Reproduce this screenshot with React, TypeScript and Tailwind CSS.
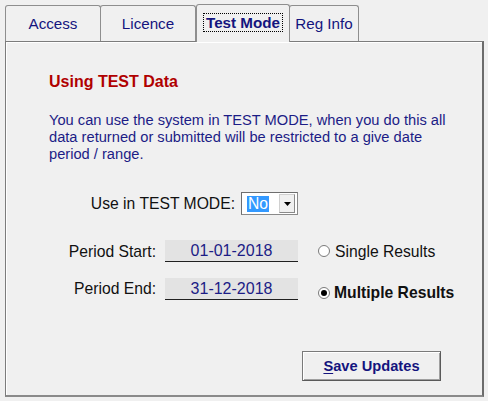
import { useState } from "react";

const TABS = ["Access", "Licence", "Test Mode", "Reg Info"];
const WIDTHS = ["w-[96px]", "w-[96px] -ml-px", "w-[94px]", "w-[70px] -ml-px"];

function Radio({ checked }: { checked: boolean }) {
  return (
    <span className="w-[12px] h-[12px] rounded-full border border-[#7a7a7a] bg-white flex items-center justify-center shrink-0">
      {checked && <span className="w-[6px] h-[6px] rounded-full bg-black" />}
    </span>
  );
}

function DateField({ value }: { value: string }) {
  return (
    <div className="w-[133px] h-[22px] bg-[#e3e3e3] border-b border-[#202020] text-[#1c1c86] text-[16px] flex items-center justify-center">
      {value}
    </div>
  );
}

export default function App() {
  const [tab, setTab] = useState(2);
  const [multi, setMulti] = useState(true);

  return (
    <div className="w-[488px] h-[401px] bg-[#f0f0f0] font-['Liberation_Sans',Arial,sans-serif] text-[15.7px] leading-[17px] overflow-hidden">
      <div className="h-[41px] flex items-end pl-[5px]">
        {TABS.map((t, i) => {
          const active = i === tab;
          return (
            <button
              key={t}
              onClick={() => setTab(i)}
              className={`${WIDTHS[i]} flex items-center justify-center bg-[#f0f0f0] border-t border-l border-r border-[#8e8e8e] rounded-t-[3px] text-[15.2px] text-[#14147e] ${
                active ? "h-[38px] -mb-px relative z-10 font-bold pb-[2px]" : "h-[36px]"
              }`}
            >
              {active ? (
                <span className="border border-dotted border-black px-[2px] h-[19px] flex items-center">{t}</span>
              ) : (
                t
              )}
            </button>
          );
        })}
      </div>

      <div className="ml-[5px] w-[479px] h-[356px] border-l border-t border-[#7c7c7c] border-r-2 border-r-[#6c6c6c] border-b-2 border-b-[#8a8a8a] shadow-[inset_1px_1px_0_#ffffff] flex flex-col">
        <div className="pt-[31px] pl-[43px] pr-[30px]">
          <h1 className="font-bold text-[16px] text-[#b00000]">Using TEST Data</h1>
          <p className="mt-[22px] text-[14.67px] text-[#1c1c86]">
            You can use the system in TEST MODE, when you do this all data returned or submitted will be restricted to a give date period / range.
          </p>
        </div>

        <div className="mt-[29px] flex items-center">
          <span className="w-[229px] text-right text-[#111]">Use in TEST MODE:</span>
          <div className="ml-[6px] w-[57px] h-[23px] bg-white border border-[#8a8a8a] border-t-[#6e6e6e] border-l-[#6e6e6e] flex items-center pl-[5px] pr-[2px]">
            <span className="bg-[#3399ff] text-white h-[16px] px-px flex items-center">No</span>
            <span className="ml-auto w-[16px] h-[19px] bg-[#f0f0f0] border border-[#d0d0d0] border-r-[#8a8a8a] border-b-[#8a8a8a] flex items-center justify-center">
              <svg width="7" height="4" viewBox="0 0 7 4">
                <path d="M0 0h7L3.5 4z" fill="#000" />
              </svg>
            </span>
          </div>
        </div>

        <div className="mt-[25px] flex items-center">
          <span className="w-[150px] text-right text-[#111]">Period Start:</span>
          <div className="ml-[9px]">
            <DateField value="01-01-2018" />
          </div>
          <label className="ml-[20px] flex items-center gap-[5px] text-[#111]" onClick={() => setMulti(false)}>
            <Radio checked={!multi} />
            Single Results
          </label>
        </div>

        <div className="mt-[14px] flex items-center">
          <span className="w-[150px] text-right text-[#111]">Period End:</span>
          <div className="ml-[9px]">
            <DateField value="31-12-2018" />
          </div>
          <label className="ml-[20px] mt-[8px] flex items-center gap-[4px] font-bold text-[#111]" onClick={() => setMulti(true)}>
            <Radio checked={multi} />
            Multiple Results
          </label>
        </div>

        <div className="mt-[50px] flex justify-end pr-[41px]">
          <button className="w-[139px] h-[30px] bg-[#f0f0f0] border border-[#7a7a7a] border-r-[#5a5a5a] border-b-[#5a5a5a] shadow-[inset_1px_1px_0_#ffffff,inset_-1px_-1px_0_#a0a0a0] font-bold text-[14.67px] text-[#14147e]">
            <span className="underline underline-offset-2">S</span>ave Updates
          </button>
        </div>
      </div>
    </div>
  );
}
